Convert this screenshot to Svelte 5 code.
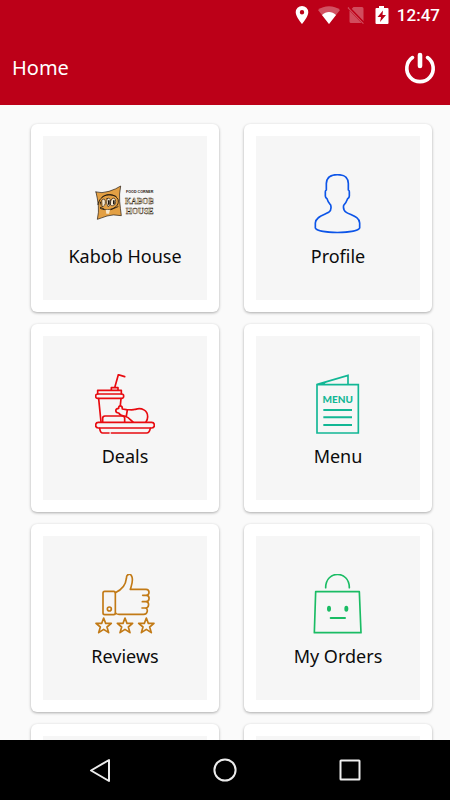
<script>
    const tiles = [
        { id: "kabob", label: "Kabob House" },
        { id: "profile", label: "Profile" },
        { id: "deals", label: "Deals" },
        { id: "menu", label: "Menu" },
        { id: "reviews", label: "Reviews" },
        { id: "orders", label: "My Orders" },
        { id: "next-left", label: "" },
        { id: "next-right", label: "" },
    ];
</script>

<div class="screen">
    <header>
        <div class="status">
            <svg viewBox="0 0 26 18" aria-hidden="true">
                <path
                    fill="#fff"
                    fill-rule="evenodd"
                    d="M13 0a6.3 6.3 0 0 0-6.3 6.3C6.700 11 13 18 13 18s6.300-7 6.300-11.700A6.300 6.300 0 0 0 13 0zm0 4.100a2.200 2.200 0 1 1 0 4.400 2.200 2.200 0 0 1 0-4.400z"
                />
            </svg>
            <svg viewBox="0 0 26 18" aria-hidden="true">
                <path fill="#fff" fill-opacity=".32" d="M13 18 2 4C8-1 18-1 24 4z" />
                <path fill="#fff" d="M13 18 6 9c4-4 10-4 14 0z" />
            </svg>
            <svg viewBox="0 0 26 18" aria-hidden="true">
                <path
                    fill="#d14c5d"
                    d="M10.500 1h8.500a1.500 1.500 0 0 1 1.500 1.500V15.500L8.500 3zM6.500 4.500 18.500 17H8A1.500 1.500 0 0 1 6.500 15.500z"
                />
                <path stroke="#d14c5d" stroke-width="1.400" d="m5 1.500 15.500 16" />
                <path stroke="#bc0018" stroke-width="1.200" d="m6.500 1.500 14.500 15" />
            </svg>
            <svg viewBox="0 0 26 18" aria-hidden="true">
                <path
                    fill="#fff"
                    fill-rule="evenodd"
                    d="M9 0h5v2h3.500a1 1 0 0 1 1 1v14a1 1 0 0 1-1 1h-11a1 1 0 0 1-1-1V3a1 1 0 0 1 1-1H9zM13 4.500 7.500 11H11l-1 5 6-7h-3.500z"
                />
            </svg>
            <time>12:47</time>
        </div>
        <div class="bar">
            <h1>Home</h1>
            <button class="power" aria-label="Log out">
                <svg viewBox="0 0 32 32" fill="none" stroke="#fff" aria-hidden="true">
                    <path stroke-width="3.6" stroke-linecap="round" d="M8.500 5.600a13.200 13.200 0 1 0 15 0" />
                    <path stroke-width="4.6" stroke-linecap="round" d="M16 3v11" />
                </svg>
            </button>
        </div>
    </header>

    <main>
        {#each tiles as tile (tile.id)}
            <button class="card" aria-label={tile.label || "More"}>
                <span class="inner">
                    {#if tile.id === "kabob"}
                        <svg class="icon" viewBox="45 12 180 180" aria-hidden="true">
                            <path
                                fill="#e3a044"
                                stroke="#1c140d"
                                stroke-width="2"
                                d="M48 66q17 5 39-2t35-16q-5 25-3 46t5 43q-26-5-43 1t-29 10q5-22 3-41t-7-41z"
                            />
                            <path fill="none" stroke="#1c140d" stroke-width="2.500" d="M54 104c3-30 45-42 60-16 8 28-35 38-53 27M66 82c9-10 27-9 42-3M61 112l11 5M93 119l21-9" />
                            <path fill="#f8e8cd" stroke="#1c140d" stroke-width="2" d="M66 90q9-8 10 5t-9 15zM81 86q9-6 11 8t-8 16q-7-10-3-24zM98 85q8-3 9 9t-9 13-7-12z" />
                            <path fill="#f8e8cd" d="M77 119h13l-3 12h-8z" />
                            <path fill="#1c140d" d="M84 91h5v13h-5zM99 91h5v12h-5zM59 93l4 4-3 11z" />
                            <text class="logo-small" x="138" y="70">FOOD CORNER</text>
                            <text class="logo-big" x="135" y="101">KABOB</text>
                            <text class="logo-big" x="137" y="131">HOUSE</text>
                        </svg>
                    {:else if tile.id === "profile"}
                        <svg class="icon" viewBox="54 27 180 180" stroke="#0d55e8" aria-hidden="true">
                            <path
                                d="M142 29c-24 0-32 10-33 26v20q-3 1-3 5v13q0 5 5 8c2 9 6 13 11 19 3 12 0 18-6 22-13 8-38 12-40 32v15c8 18 124 18 133 0v-15c-1-20-26-23-40-32-8-5-10-11-8-21 7-6 9-12 12-20q5-3 5-8V80q0-4-3-5V55c-1-18-10-26-33-26z"
                            />
                        </svg>
                    {:else if tile.id === "deals"}
                        <svg class="icon" viewBox="45 27 180 180" stroke="#e80b10" aria-hidden="true">
                            <path d="m134 35-19-6-11 39M94 76v-8h20v8M53 87V76h71v11" />
                            <rect x="47" y="87" width="84" height="13" rx="6" />
                            <path d="m56 101 7 70M123 101l-2 20" />
                            <path d="M68 171v-11q0-7 7-7h52q7 0 7 7v11" />
                            <path
                                d="M139 134c11 0 19 2 27-1 19-6 37 3 37 22 0 6-2 11-5 16M139 134l-12-2c1-11-12-13-11-2-12 1-11 14 0 14 5 8 12 9 20 10 12 4 16 12 23 17M142 135l-3 18"
                            />
                            <rect x="47" y="172" width="176" height="17" rx="8" />
                            <path d="M59 190q2 14 9 14h19M94 204h106q8 0 11-14" />
                        </svg>
                    {:else if tile.id === "menu"}
                        <svg class="icon" viewBox="54 27 180 180" aria-hidden="true">
                            <g fill="none" stroke="#12b795" stroke-width="5" stroke-linejoin="miter">
                                <path d="M81 59h124v145H81zM82 58l92-27v27" />
                                <path stroke-width="6" stroke-linecap="butt" d="M100 135h86M100 157h86M100 180h86" />
                            </g>
                            <path fill="#12b795" d="m79 59 31-9-8 9z" />
                            <text class="menu-text" x="143" y="114" text-anchor="middle">MENU</text>
                        </svg>
                    {:else if tile.id === "reviews"}
                        <svg class="icon" viewBox="45 27 180 180" stroke="#c27a16" aria-hidden="true">
                            <rect x="69" y="79" width="37" height="70" rx="5" />
                            <circle cx="88" cy="132" r="6" />
                            <path
                                d="M106 83c16-7 31-22 33-42 0-16 13-17 17-5 4 13-1 24-5 37h47c12 0 12 18 0 18h-10M199 91c12 1 10 19-1 19h-11M198 110c11 1 10 19-2 19h-10M196 129c9 2 8 19-5 19h-74q-8 0-10-4"
                            />
                            <path
                                d="m71 159 6 16h17l-13 11 5 17-15-10-15 10 5-17-13-11h17zM135 159l6 16h17l-13 11 5 17-15-10-15 10 5-17-13-11h17zM199 159l6 16h17l-13 11 5 17-15-10-15 10 5-17-13-11h17z"
                            />
                        </svg>
                    {:else if tile.id === "orders"}
                        <svg class="icon" viewBox="69 27 180 180" stroke="#1abc64" aria-hidden="true">
                            <path d="M92 80h131l5 123H88z" />
                            <path d="M122 68c0-53 71-53 71 0" />
                            <path stroke-width="6" d="M137 159h43" />
                            <g fill="#1abc64" stroke="none">
                                <ellipse cx="132" cy="131" rx="6" ry="9" />
                                <ellipse cx="184" cy="131" rx="6" ry="9" />
                            </g>
                        </svg>
                    {/if}
                    <span class="label">{tile.label}</span>
                </span>
            </button>
        {/each}
    </main>

    <nav>
        <button aria-label="Back">
            <svg viewBox="0 0 26 26" aria-hidden="true"><path d="M22 3v21L4 13.500z" /></svg>
        </button>
        <button aria-label="Home screen">
            <svg viewBox="0 0 26 26" aria-hidden="true"><circle cx="13" cy="13" r="10.600" /></svg>
        </button>
        <button aria-label="Recent apps">
            <svg viewBox="0 0 26 26" aria-hidden="true"><rect x="3.500" y="3.500" width="19" height="19" rx="0.500" /></svg>
        </button>
    </nav>
</div>

<style>
    :global(body) {
        margin: 0;
        background: #fafafa;
    }

    .screen {
        display: flex;
        flex-direction: column;
        height: 100vh;
        overflow: hidden;
        font-family: "Noto Sans", sans-serif;
        color: #0c0c0c;
    }

    button {
        padding: 0;
        border: 0;
        background: none;
        font: inherit;
        color: inherit;
        cursor: pointer;
    }

    svg {
        display: block;
    }

    header {
        flex: none;
        background: #bc0018;
        color: #fff;
    }

    .status {
        display: flex;
        align-items: center;
        justify-content: flex-end;
        gap: 1px;
        height: 30px;
        padding-right: 10px;
    }

    .status svg {
        width: 26px;
        height: 18px;
    }

    .status time {
        font: 500 17px/30px Roboto, sans-serif;
    }

    .bar {
        display: flex;
        align-items: center;
        justify-content: space-between;
        height: 75px;
        padding: 0 14px 0 12px;
    }

    h1 {
        margin: 0;
        font-size: 20px;
        font-weight: 400;
        line-height: 28px;
    }

    .power svg {
        width: 32px;
        height: 32px;
    }

    main {
        flex: 1;
        min-height: 0;
        display: grid;
        grid-template-columns: 1fr 1fr;
        align-content: start;
        gap: 12px 25px;
        padding: 19px 18px 0 31px;
        overflow: hidden;
    }

    .card {
        display: flex;
        aspect-ratio: 1;
        padding: 12px;
        border-radius: 6px;
        background: #fff;
        box-shadow: 0 1px 3px rgba(0, 0, 0, 0.32);
    }

    .inner {
        flex: 1;
        align-self: stretch;
        display: flex;
        flex-direction: column;
        align-items: center;
        gap: 8px;
        padding-top: 38px;
        background: #f6f6f6;
    }

    .icon {
        width: 60px;
        height: 60px;
        fill: none;
        stroke-width: 5;
        stroke-linecap: round;
        stroke-linejoin: round;
    }

    .label {
        font-size: 18px;
        line-height: 28px;
    }

    .logo-small {
        fill: #1c140d;
        font: 700 11px "Liberation Sans", sans-serif;
    }

    .logo-big {
        fill: #f3dfb8;
        stroke: #1c140d;
        stroke-width: 1;
        font: 700 24px "Liberation Serif", serif;
    }

    .menu-text {
        fill: #12b795;
        font: 900 30px Lato, sans-serif;
    }

    nav {
        flex: none;
        display: flex;
        justify-content: center;
        gap: 99px;
        height: 60px;
        background: #000;
    }

    nav svg {
        width: 26px;
        height: 26px;
        fill: none;
        stroke: #ececec;
        stroke-width: 2;
        stroke-linejoin: round;
    }
</style>
